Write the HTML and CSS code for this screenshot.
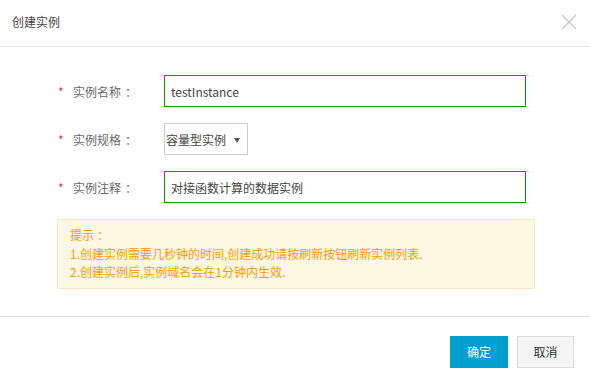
FILE: index.html
```html
<!DOCTYPE html>
<html lang="zh-CN">
<head>
    <meta charset="UTF-8">
    <title>创建实例</title>
    <link rel="stylesheet" href="styles.css">
</head>
<body>
    <div class="dialog">
        <div class="dialog-header">
            <span class="dialog-title">创建实例</span>
            <span class="close-btn">
                <svg width="16" height="16" viewBox="0 0 16 16">
                    <path d="M1 1 L15 15 M15 1 L1 15" stroke="#c8c8c8" stroke-width="1.4" fill="none"/>
                </svg>
            </span>
        </div>

        <div class="dialog-body">
            <div class="form-row">
                <label class="form-label"><span class="required">*</span>实例名称<span class="colon">：</span></label>
                <div class="form-field">
                    <input type="text" class="text-input" value="testInstance">
                </div>
            </div>

            <div class="form-row">
                <label class="form-label"><span class="required">*</span>实例规格<span class="colon">：</span></label>
                <div class="form-field">
                    <div class="select-box">容量型实例<span class="caret"></span></div>
                </div>
            </div>

            <div class="form-row">
                <label class="form-label"><span class="required">*</span>实例注释<span class="colon">：</span></label>
                <div class="form-field">
                    <input type="text" class="text-input" value="对接函数计算的数据实例">
                </div>
            </div>

            <div class="notice">
                <p>提示<span class="colon">：</span></p>
                <p>1.创建实例需要几秒钟的时间,创建成功请按刷新按钮刷新实例列表.</p>
                <p>2.创建实例后,实例域名会在1分钟内生效.</p>
            </div>
        </div>

        <div class="dialog-footer">
            <button class="btn btn-primary">确定</button>
            <button class="btn btn-default">取消</button>
        </div>
    </div>
</body>
</html>
```

FILE: styles.css
```css
* {
    box-sizing: border-box;
    margin: 0;
    padding: 0;
    font-family: "Noto Sans CJK SC", "Liberation Sans", sans-serif;
}

body {
    background: #fff;
    width: 590px;
    height: 383px;
    overflow: hidden;
}

.dialog {
    width: 590px;
    height: 383px;
    background: #fff;
}

.dialog-header {
    height: 47px;
    padding: 0 13px 4px 12px;
    border-bottom: 1px solid #e5e5e5;
    display: flex;
    align-items: center;
    justify-content: space-between;
}

.dialog-title {
    font-size: 12px;
    color: #444;
}

.close-btn {
    display: flex;
    margin-top: 1px;
}

.dialog-body {
    padding: 28px 0 27px 57px;
}

.form-row {
    display: flex;
    align-items: center;
    height: 32px;
    margin-bottom: 16px;
}

.form-label {
    width: 107px;
    font-size: 12px;
    color: #6a6a6a;
    display: flex;
    align-items: center;
}

.colon {
    padding-left: 4px;
}

.required {
    color: #f33;
    width: 16px;
    padding-left: 1px;
    font-size: 12px;
}

.text-input {
    width: 362px;
    height: 32px;
    border: 1px solid #090;
    padding: 0 6px;
    font-size: 12px;
    color: #444;
    outline: none;
}

.select-box {
    width: 84px;
    height: 32px;
    border: 1px solid #ccc;
    padding: 0 0 0 1px;
    display: flex;
    align-items: center;
    font-size: 12px;
    color: #444;
}

.caret {
    width: 0;
    height: 0;
    margin-left: 8px;
    margin-top: 3px;
    border-left: 3px solid transparent;
    border-right: 3px solid transparent;
    border-top: 5px solid #555;
}

.notice {
    width: 478px;
    margin-top: 1px;
    background: #fdf8e2;
    border: 1px solid #fbe8bd;
    padding: 6px 12px 6px 12px;
    color: #f90;
    font-size: 12px;
    line-height: 18.5px;
}

.notice .colon {
    padding-left: 3px;
}

.dialog-footer {
    border-top: 1px solid #e5e5e5;
    display: flex;
    justify-content: flex-end;
    gap: 9px;
    padding: 19px 16px 0 0;
}

.btn {
    height: 32px;
    font-size: 12px;
    cursor: pointer;
}

.btn-primary {
    width: 58px;
    background: #009fcd;
    border: none;
    color: #fff;
}

.btn-default {
    width: 57px;
    background: #f5f5f5;
    border: 1px solid #ddd;
    color: #333;
}
```
